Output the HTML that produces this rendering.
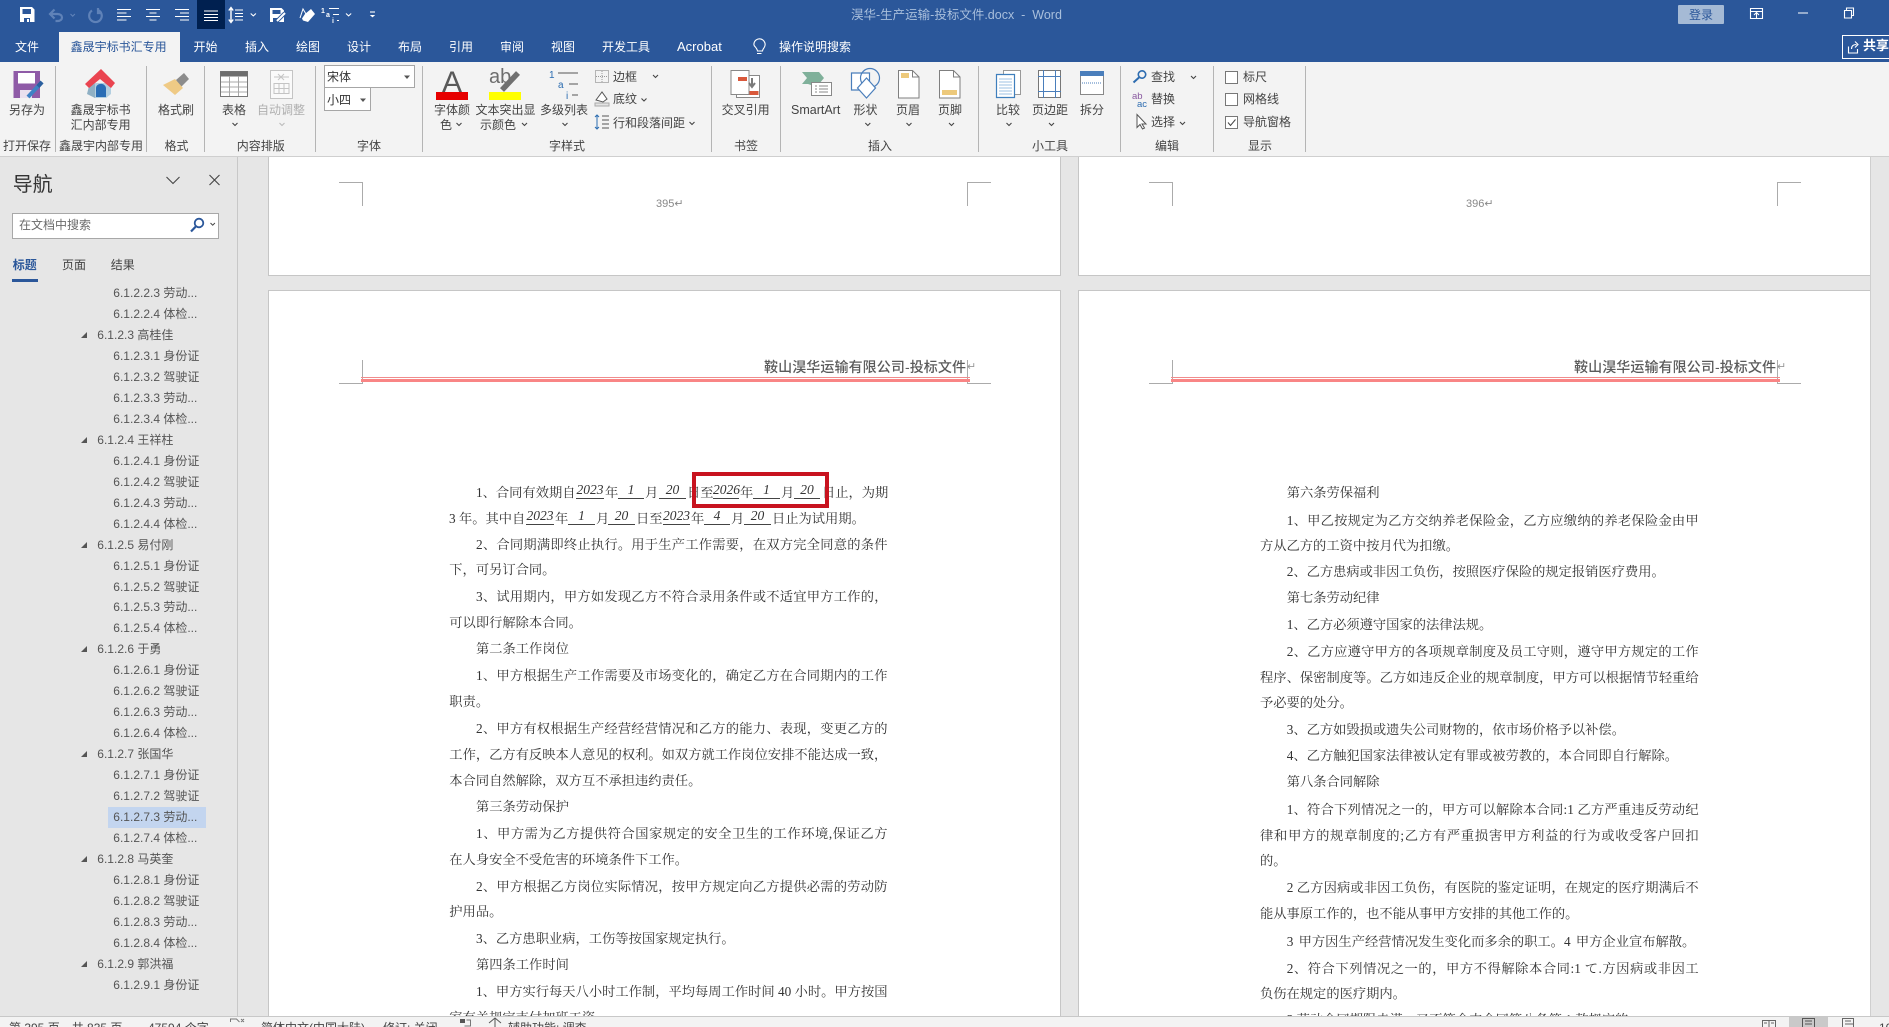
<!DOCTYPE html>
<html lang="zh-CN">
<head>
<meta charset="utf-8">
<title>淏华-生产运输-投标文件.docx - Word</title>
<style>
html,body{margin:0;padding:0;width:1889px;height:1027px;overflow:hidden;background:#e6e6e6}
body{position:relative;font-family:"Liberation Sans","Noto Sans CJK SC",sans-serif}
.abs{position:absolute}
.t{position:absolute;white-space:nowrap;font:12px/16px "Liberation Sans","Noto Sans CJK SC",sans-serif;color:#444}
.w{color:#fff}
.sep{position:absolute;width:1px;top:66px;height:86px;background:#b4b4b4}
.page{position:absolute;background:#fff;border:1px solid #c6c6c6;box-sizing:border-box}
.mk{position:absolute;background:#ababab}
.b{position:absolute;white-space:nowrap;font:13.27px/20px "Liberation Serif","Noto Serif CJK SC",serif;color:#333;height:20px}
.f{left:476px;width:411.5px;text-align:justify;text-align-last:justify}
.c{left:449.3px;width:438px;text-align:justify;text-align-last:justify}
.f2{left:1286.7px;width:412px;text-align:justify;text-align-last:justify}
.c2{left:1260px;width:438.7px;text-align:justify;text-align-last:justify}
.l1{left:476px}.l2{left:449.3px}.r1{left:1286.7px}.r2{left:1260px}
.h{position:absolute;font:italic 13.5px/17px "Liberation Serif",serif;color:#333;border-bottom:1px solid #444;text-align:center;height:17px;box-sizing:content-box}
.blur{position:absolute;left:0;top:1px;width:1889px;height:1027px;filter:blur(.3px)}
#tree{position:absolute;left:0;top:283.2px;width:237px;font:12px/20.96px "Liberation Sans","Noto Sans CJK SC",sans-serif;color:#555}
#tree div{height:20.96px;padding-left:113.3px;white-space:nowrap;box-sizing:border-box;position:relative}
#tree div.p{padding-left:97.3px}
#tree div.p:before{content:"";position:absolute;left:81px;top:7px;width:0;height:0;border-style:solid;border-width:0 0 6.5px 6.5px;border-color:transparent transparent #555 transparent}
</style>
</head>
<body>
<!-- title + tabs -->
<div class="abs" style="left:0;top:0;width:1889px;height:62px;background:#2b579a"></div>
<div class="abs" style="left:197px;top:0;width:28px;height:29px;background:#002050"></div>
<div class="t" style="left:851px;top:7px;color:#a9bfdc;font-size:12.5px">淏华-生产运输-投标文件.docx&nbsp; - &nbsp;Word</div>
<div class="abs" style="left:59px;top:32px;width:121px;height:30px;background:#f3f3f3"></div>
<div class="t w" style="left:15px;top:39px">文件</div>
<div class="t" style="left:70.6px;top:39px;color:#2b579a">鑫晟宇标书汇专用</div>
<div class="t w" style="left:193.5px;top:39px">开始</div>
<div class="t w" style="left:245px;top:39px">插入</div>
<div class="t w" style="left:296px;top:39px">绘图</div>
<div class="t w" style="left:347px;top:39px">设计</div>
<div class="t w" style="left:398px;top:39px">布局</div>
<div class="t w" style="left:449px;top:39px">引用</div>
<div class="t w" style="left:500px;top:39px">审阅</div>
<div class="t w" style="left:551px;top:39px">视图</div>
<div class="t w" style="left:602px;top:39px">开发工具</div>
<div class="t w" style="left:677px;top:39px;font-size:13px">Acrobat</div>
<div class="t w" style="left:779px;top:39px">操作说明搜索</div>
<div class="abs" style="left:1678px;top:5px;width:46px;height:19px;background:#a5bad5;border-radius:1px"></div>
<div class="t" style="left:1689px;top:7px;color:#2b579a">登录</div>
<div class="abs" style="left:1842px;top:35px;width:60px;height:24px;border:1px solid #fff;box-sizing:border-box"></div>
<div class="t w" style="left:1863px;top:38px;font-size:13px;font-weight:700">共享</div>

<!-- ribbon -->
<div class="abs" style="left:0;top:62px;width:1889px;height:94px;background:#f3f3f3"></div>
<div class="abs" style="left:0;top:156px;width:1889px;height:1px;background:#cfcfcf"></div>
<div class="sep" style="left:55px"></div><div class="sep" style="left:146px"></div><div class="sep" style="left:204px"></div><div class="sep" style="left:315px"></div><div class="sep" style="left:422px"></div><div class="sep" style="left:711px"></div><div class="sep" style="left:780px"></div><div class="sep" style="left:978px"></div><div class="sep" style="left:1120px"></div><div class="sep" style="left:1213px"></div><div class="sep" style="left:1305px"></div>

<div class="t" style="left:9px;top:102px">另存为</div>
<div class="t" style="left:3px;top:138px">打开保存</div>
<div class="t" style="left:70.6px;top:102px">鑫晟宇标书</div>
<div class="t" style="left:70.6px;top:117px">汇内部专用</div>
<div class="t" style="left:59px;top:138px">鑫晟宇内部专用</div>
<div class="t" style="left:158px;top:102px">格式刷</div>
<div class="t" style="left:164.5px;top:138px">格式</div>
<div class="t" style="left:222px;top:102px">表格</div>
<div class="t" style="left:257px;top:102px;color:#b0b0b0">自动调整</div>
<div class="t" style="left:236.7px;top:138px">内容排版</div>
<div class="abs" style="left:324px;top:65px;width:91px;height:23px;background:#fff;border:1px solid #a6a6a6;box-sizing:border-box"></div>
<div class="abs" style="left:324px;top:87px;width:47px;height:24px;background:#fff;border:1px solid #a6a6a6;box-sizing:border-box"></div>
<div class="t" style="left:327px;top:69px;color:#333">宋体</div>
<div class="t" style="left:327px;top:92px;color:#333">小四</div>
<div class="t" style="left:357px;top:138px">字体</div>
<div class="t" style="left:434px;top:102px">字体颜</div>
<div class="t" style="left:440px;top:117px">色</div>
<div class="t" style="left:475.5px;top:102px">文本突出显</div>
<div class="t" style="left:480px;top:117px">示颜色</div>
<div class="t" style="left:540px;top:102px">多级列表</div>
<div class="t" style="left:549px;top:138px">字样式</div>
<div class="t" style="left:613px;top:69px">边框</div>
<div class="t" style="left:613px;top:91px">底纹</div>
<div class="t" style="left:613px;top:115px">行和段落间距</div>
<div class="t" style="left:721.6px;top:102px">交叉引用</div>
<div class="t" style="left:734px;top:138px">书签</div>
<div class="t" style="left:791px;top:102px;font-size:12.5px">SmartArt</div>
<div class="t" style="left:853.5px;top:102px">形状</div>
<div class="t" style="left:896px;top:102px">页眉</div>
<div class="t" style="left:938px;top:102px">页脚</div>
<div class="t" style="left:868px;top:138px">插入</div>
<div class="t" style="left:996px;top:102px">比较</div>
<div class="t" style="left:1032px;top:102px">页边距</div>
<div class="t" style="left:1080px;top:102px">拆分</div>
<div class="t" style="left:1032px;top:138px">小工具</div>
<div class="t" style="left:1151px;top:69px">查找</div>
<div class="t" style="left:1151px;top:91px">替换</div>
<div class="t" style="left:1151px;top:114px">选择</div>
<div class="t" style="left:1155px;top:138px">编辑</div>
<div class="t" style="left:1243px;top:69px">标尺</div>
<div class="t" style="left:1243px;top:91px">网格线</div>
<div class="t" style="left:1243px;top:114px">导航窗格</div>
<div class="t" style="left:1248px;top:138px">显示</div>

<!-- icons -->
<svg class="abs" style="left:0;top:0" width="1889" height="157" viewBox="0 0 1889 157" fill="none">
<!-- QAT -->
<path d="M20 7h12l2.500 2.500V22H20z" fill="#fff"/><path d="M22.500 9h8.500v5h-8.500zM24 18h6v4h-6z" fill="#2b579a"/><path d="M27 19h2v3h-2z" fill="#fff"/>
<path d="M50.500 14h7c6 0 6 7 0 7h-2M54.500 9.500L50 14l4.500 4.500" stroke="#5f82b8" stroke-width="2.200"/>
<path d="M70.500 14l2.200 2.200 2.200-2.200" stroke="#5f82b8" stroke-width="1.100"/>
<path d="M92 9.500a6.300 6.300 0 1 0 6-.5M98 7v5h4" stroke="#5f82b8" stroke-width="2.200" transform="translate(0,1)"/>
<g stroke="#fff" stroke-width="1.100">
<path d="M117 9.500h14M117 13h9.500M117 16.500h14M117 20h9.500"/>
<path d="M146 9.500h14M149.500 13h7M146 16.500h14M149.500 20h7"/>
<path d="M175 9.500h14M180 13h9M175 16.500h14M180 20h9"/>
<path d="M204 11h14M204 14.500h14M204 17.500h14M204 20.500h14"/>
<path d="M235 10h8M235 13.500h8M235 16.500h8M235 20h8"/>
<path d="M231 8v14M228.800 10.500L231 7.500l2.200 3M228.800 19.500l2.200 3 2.200-3" stroke-width="1.400"/>
<path d="M250.700 13.500l2.600 2.400 2.600-2.400M346 13.500l2.600 2.400 2.600-2.400"/>
<path d="M329 8.500h10M333 14.500h6M337 20.500h2"/>
<path d="M370 12h5"/>
<path d="M1750.500 8.500h12v10h-12zM1750.500 11.500h12M1756.500 18v-5M1754 15l2.500-2.500 2.500 2.500M1798 13h10M1844.500 10.500h7v7.500h-7zM1846.500 10v-2h7v7.500h-2"/>
<path d="M1848.500 46.500v6.500h9v-4M1851.500 49c0-3 2-4.500 5-4.500M1855 41.500l3 3-3 3"/>
<path d="M753.900 44.500a5.600 5.600 0 1 1 10.300 3c-1 1.500-1.700 2.200-1.700 3.500h-5c0-1.300-.7-2-1.700-3.500-.5-.8-1.900-1.500-1.900-3z M757 53.500h4.500"/>
</g>
<path d="M270 8h11.500l2.500 2.500V22h-14z" fill="#fff"/><path d="M272.500 10h8v4h-8zM273 18h5v4h-5z" fill="#2b579a"/>
<path d="M276 22l9-9" stroke="#2b579a" stroke-width="4"/><path d="M277 21l8-8" stroke="#fff" stroke-width="2"/>
<path d="M305 14l6-5 4 5-7 8-5-1.500-1-2z" fill="#fff"/>
<path d="M300 18l3-9 3 5" stroke="#fff" stroke-width="1"/>
<text x="321" y="13" font-family="Liberation Sans" font-size="7" font-weight="700" fill="#fff">1</text>
<text x="326" y="17" font-family="Liberation Sans" font-size="7" font-weight="700" fill="#fff">a</text>
<text x="332" y="23" font-family="Liberation Sans" font-size="7" font-weight="700" fill="#fff">i</text>
<path d="M369.800 15h5.400l-2.700 2.400z" fill="#fff"/>
<!-- save as -->
<path d="M13.500 71h26.500v27H13.500z" fill="#8f5ba7"/>
<path d="M18 73h17v10.500H18z" fill="#fff"/><path d="M20 90h12v8H20z" fill="#e9e0ee"/>
<path d="M42 82L28 97" stroke="#3f82c4" stroke-width="4"/><path d="M42 82L38 86.500" stroke="#2b5f9e" stroke-width="4"/>
<!-- home -->
<path d="M90 83h21v11l-5 4H95l-5-4z" fill="#b3cfe0"/>
<path d="M89 86l-2 8 8 4v-14z" fill="#8fb0c4"/>
<path d="M101 69L85 84l4 4 11-9 11 9 4-5z" fill="#ea4450"/>
<path d="M96 88c0-5 9-6 10 0v9H96z" fill="#2a6db5"/>
<!-- brush -->
<path d="M176 80l8-7 5 6-8 8z" fill="#8c8c8c"/>
<path d="M163 85l12-6 8 9-8 7z" fill="#efca85"/>
<!-- table -->
<path d="M220.500 71.500h27v25h-27z" fill="#fff" stroke="#777"/><path d="M220.500 71.500h27v5h-27z" fill="#6e6e6e"/>
<path d="M229.500 76v20M238.500 76v20M221 82h26M221 87h26M221 92h26" stroke="#a8a8a8"/>
<!-- autofit -->
<path d="M270.500 70.500h22v28h-22z" fill="#fafafa" stroke="#c4c4c4"/>
<path d="M274 77h15M278 74l6 6M284 74l-6 6M274 83.500h15v10h-15zM274 88.500h15M279 83.500v10M284 83.500v10" stroke="#c4c4c4"/>
<!-- font color -->
<text x="452" y="92" text-anchor="middle" font-family="Liberation Sans" font-size="30" fill="#595959">A</text>
<path d="M436 92h32v8h-32z" fill="#e60000"/>
<text x="489" y="83" font-family="Liberation Sans" font-size="20" fill="#6e6e6e">ab</text>
<path d="M502 90L518 73" stroke="#707070" stroke-width="5.500"/>
<path d="M489 92h32v8h-32z" fill="#ffff00"/>
<!-- multilevel -->
<text x="549" y="78" font-family="Liberation Sans" font-size="10" fill="#2b6cb0">1</text>
<text x="558" y="88" font-family="Liberation Sans" font-size="10" fill="#2b6cb0">a</text>
<text x="566" y="99" font-family="Liberation Sans" font-size="10" fill="#2b6cb0">i</text>
<path d="M558 73h20M569 84h9M572 95h6" stroke="#555"/>
<!-- borders etc -->
<path d="M595.500 70.500h13v12h-13z" stroke="#777" stroke-dasharray="1 1"/><path d="M602 71v11M596 76.500h12" stroke="#999" stroke-dasharray="1 1"/>
<path d="M596 100l6-8 5 7-4 3z" stroke="#555" fill="#fff"/><path d="M595 103h14v3h-14z" fill="#e3e3e3" stroke="#aaa"/>
<path d="M597 115v14M595 117l2-2 2 2M595 127l2 2 2-2" stroke="#2b6cb0"/><path d="M602 116h7M602 120h7M602 124h7M602 128h7" stroke="#555"/>
<!-- cross ref -->
<path d="M736.500 75.500h23v22h-23z" fill="#fff" stroke="#888"/>
<path d="M731 70.500h18v24h-18z" fill="#fff" stroke="#888"/>
<path d="M738 77h9v4h-9z" fill="#d9583b"/><path d="M749.500 91h9v4h-9z" fill="#d9583b"/>
<path d="M752 78v8M749 83l3 4 3-4" stroke="#7a7a7a" stroke-width="2"/>
<!-- smartart -->
<path d="M802 72h17l5 6-5 6v10h-8v-9l-3-1h-6l5-6z" fill="#7fb09a"/>
<path d="M811.500 82.500h20v13h-20z" fill="#fff" stroke="#888"/><path d="M815 86h2M819 86h9M815 89h2M819 89h9M815 92h2M819 92h9" stroke="#888"/>
<!-- shapes -->
<path d="M851.500 73h18v17h-18z" fill="#fff" stroke="#4a7ebb" stroke-width="1.200"/>
<circle cx="870" cy="78" r="9.500" stroke="#4a7ebb" stroke-width="1.200"/>
<path d="M866.500 78l9 10-9 10-9-10z" fill="#fff" stroke="#4a7ebb" stroke-width="1.200"/>
<!-- header footer -->
<path d="M898.500 70.500h14l6.500 6.500v21h-20.500z" fill="#fff" stroke="#7f7f7f"/><path d="M912.500 70.500v6.500h6.500" stroke="#7f7f7f"/><path d="M901 73h8v5h-8z" fill="#edc97b"/>
<path d="M939.500 70.500h14l6.500 6.500v21h-20.500z" fill="#fff" stroke="#7f7f7f"/><path d="M953.500 70.500v6.500h6.500" stroke="#7f7f7f"/><path d="M942 90h15v5h-15z" fill="#edc97b"/>
<!-- compare -->
<path d="M1003.500 70.500h17v24h-17z" fill="#fff" stroke="#999"/><path d="M996.500 74.500h18v23h-18z" fill="#fff" stroke="#3f7fbd" stroke-width="1.200"/>
<path d="M999 79h13M999 82h13M999 85h13M999 88h13M999 91h13M999 94h13" stroke="#9dc1e3"/>
<!-- margins -->
<path d="M1038.500 70.500h22v27h-22z" fill="#fff" stroke="#777"/><path d="M1043.500 70v28M1055.500 70v28M1038 76.500h23M1038 91.500h23" stroke="#4a7ebb"/>
<!-- split -->
<path d="M1080.500 71.500h23v23h-23z" fill="#fff" stroke="#888"/><path d="M1080 71h24v5h-24z" fill="#4a7ebb"/><path d="M1082 83h20" stroke="#4a7ebb" stroke-dasharray="1 1"/>
<!-- find / replace / select -->
<circle cx="1142" cy="74.500" r="3.700" stroke="#2d6cb0" stroke-width="1.600"/><path d="M1139 77.500l-5.500 5" stroke="#2d6cb0" stroke-width="2"/>
<text x="1132" y="99" font-family="Liberation Sans" font-size="9.500" fill="#8a5aa0">ab</text>
<text x="1137" y="107" font-family="Liberation Sans" font-size="9.500" fill="#2d6cb0">ac</text>
<path d="M1137 114.500v13l3-3 2.500 4.500 2-1-2.500-4h4z" fill="#fff" stroke="#555"/>
<!-- check boxes -->
<path d="M1225.500 71.500h12v12h-12zM1225.500 93.500h12v12h-12zM1225.500 116.500h12v12h-12z" fill="#fff" stroke="#777"/>
<path d="M1228 122.500l2.500 3 5-6" stroke="#444"/>
<!-- chevrons -->
<path d="M232.500 123l2.500 2.500 2.500-2.500M456.500 123l2.500 2.500 2.500-2.500M522 123l2.500 2.500 2.500-2.500M562.500 123l2.500 2.500 2.500-2.500M653 75l2.500 2.500 2.500-2.500M641.500 98.500l2.500 2.500 2.500-2.500M689.500 122l2.500 2.500 2.500-2.500M865.300 123l2.500 2.500 2.500-2.500M906.500 123l2.500 2.500 2.500-2.500M949 123l2.500 2.500 2.500-2.500M1006.500 123l2.500 2.500 2.500-2.500M1049 123l2.500 2.500 2.500-2.500M1191 76l2.500 2.500 2.500-2.500M1180 122l2.500 2.500 2.500-2.500" stroke="#444" stroke-width="1.100"/>
<path d="M279.500 123l2.500 2.500 2.500-2.500" stroke="#bbb" stroke-width="1.100"/>
<path d="M404 75.500h6l-3 3.500zM360 98.500h6l-3 3.500z" fill="#555"/>
</svg>

<!-- nav pane -->
<div class="abs" style="left:237px;top:157px;width:1px;height:859px;background:#c8c8c8"></div>
<div class="t" style="left:12.7px;top:173px;font-size:20px;line-height:24px;color:#333">导航</div>
<svg class="abs" style="left:0;top:157px" width="237" height="130" fill="none">
<path d="M166.500 20l6.500 6.500 6.500-6.500M209.500 18l10 10M219.500 18l-10 10" stroke="#444" stroke-width="1.100"/>
</svg>
<div class="abs" style="left:12px;top:213px;width:207px;height:26px;background:#fff;border:1px solid #a8a8a8;box-sizing:border-box"></div>
<div class="t" style="left:19px;top:217px;color:#6a6a6a">在文档中搜索</div>
<svg class="abs" style="left:185px;top:215px" width="34" height="22" fill="none">
<circle cx="14" cy="8" r="4.300" stroke="#2b579a" stroke-width="1.800"/><path d="M10.800 11.500l-4.800 5" stroke="#2b579a" stroke-width="2.200"/>
<path d="M25.500 8l2.200 2.200 2.200-2.200" stroke="#444"/>
</svg>
<div class="t" style="left:12.7px;top:257px;color:#2b579a;font-weight:700">标题</div>
<div class="t" style="left:62px;top:257px">页面</div>
<div class="t" style="left:110.7px;top:257px">结果</div>
<div class="abs" style="left:12px;top:279px;width:26px;height:3px;background:#2b579a"></div>
<div id="tree">
<div>6.1.2.2.3 劳动...</div>
<div>6.1.2.2.4 体检...</div>
<div class="p">6.1.2.3 高桂佳</div>
<div>6.1.2.3.1 身份证</div>
<div>6.1.2.3.2 驾驶证</div>
<div>6.1.2.3.3 劳动...</div>
<div>6.1.2.3.4 体检...</div>
<div class="p">6.1.2.4 王祥柱</div>
<div>6.1.2.4.1 身份证</div>
<div>6.1.2.4.2 驾驶证</div>
<div>6.1.2.4.3 劳动...</div>
<div>6.1.2.4.4 体检...</div>
<div class="p">6.1.2.5 易付刚</div>
<div>6.1.2.5.1 身份证</div>
<div>6.1.2.5.2 驾驶证</div>
<div>6.1.2.5.3 劳动...</div>
<div>6.1.2.5.4 体检...</div>
<div class="p">6.1.2.6 于勇</div>
<div>6.1.2.6.1 身份证</div>
<div>6.1.2.6.2 驾驶证</div>
<div>6.1.2.6.3 劳动...</div>
<div>6.1.2.6.4 体检...</div>
<div class="p">6.1.2.7 张国华</div>
<div>6.1.2.7.1 身份证</div>
<div>6.1.2.7.2 驾驶证</div>
<div style="background:linear-gradient(to right,transparent 108px,#c3d5ef 108px,#c3d5ef 206px,transparent 206px)">6.1.2.7.3 劳动...</div>
<div>6.1.2.7.4 体检...</div>
<div class="p">6.1.2.8 马英奎</div>
<div>6.1.2.8.1 身份证</div>
<div>6.1.2.8.2 驾驶证</div>
<div>6.1.2.8.3 劳动...</div>
<div>6.1.2.8.4 体检...</div>
<div class="p">6.1.2.9 郭洪福</div>
<div>6.1.2.9.1 身份证</div>
</div>

<!-- pages -->
<div class="page" style="left:268px;width:793px;border-top:0;top:157px;height:119px"></div>
<div class="page" style="left:1078px;top:157px;width:793px;height:119px;border-top:0"></div>
<div class="page" style="left:268px;top:290px;width:793px;height:730px"></div>
<div class="page" style="left:1078px;top:290px;width:793px;height:730px"></div>
<div class="abs" style="left:1870px;top:157px;width:1px;height:859px;background:#cfcfcf"></div>

<!-- crop marks -->
<div class="mk" style="left:339px;top:182px;width:24px;height:1px"></div><div class="mk" style="left:362px;top:182px;width:1px;height:24px"></div>
<div class="mk" style="left:967px;top:182px;width:24px;height:1px"></div><div class="mk" style="left:967px;top:182px;width:1px;height:24px"></div>
<div class="mk" style="left:1149px;top:182px;width:24px;height:1px"></div><div class="mk" style="left:1172px;top:182px;width:1px;height:24px"></div>
<div class="mk" style="left:1777px;top:182px;width:24px;height:1px"></div><div class="mk" style="left:1777px;top:182px;width:1px;height:24px"></div>
<div class="mk" style="left:339px;top:383px;width:24px;height:1px"></div><div class="mk" style="left:362px;top:360px;width:1px;height:24px"></div>
<div class="mk" style="left:967px;top:383px;width:24px;height:1px"></div><div class="mk" style="left:967px;top:360px;width:1px;height:24px"></div>
<div class="mk" style="left:1149px;top:383px;width:24px;height:1px"></div><div class="mk" style="left:1172px;top:360px;width:1px;height:24px"></div>
<div class="mk" style="left:1777px;top:383px;width:24px;height:1px"></div><div class="mk" style="left:1777px;top:360px;width:1px;height:24px"></div>

<div class="t" style="left:656px;top:196px;font-size:11px;color:#888">395↵</div>
<div class="t" style="left:1466px;top:196px;font-size:11px;color:#888">396↵</div>

<div class="abs" style="left:361px;top:377px;width:609px;height:1px;background:#f08c8c"></div>
<div class="abs" style="left:361px;top:379px;width:609px;height:3px;background:#f98585"></div>
<div class="abs" style="left:1171px;top:377px;width:609px;height:1px;background:#f08c8c"></div>
<div class="abs" style="left:1171px;top:379px;width:609px;height:3px;background:#f98585"></div>
<div class="t" style="left:764px;top:357px;width:202px;height:20px;font-size:14px;line-height:20px;color:#5a5a5a;font-weight:500;text-align:justify;text-align-last:justify">鞍山淏华运输有限公司-投标文件</div>
<div class="t" style="left:1574px;top:357px;width:202px;height:20px;font-size:14px;line-height:20px;color:#5a5a5a;font-weight:500;text-align:justify;text-align-last:justify">鞍山淏华运输有限公司-投标文件</div>
<div class="t" style="left:967px;top:359px;font-size:11px;color:#999">↵</div>
<div class="t" style="left:1777px;top:359px;font-size:11px;color:#999">↵</div>

<div class="blur">
<!-- left page -->
<div class="b" style="left:476px;top:482px;width:99px;text-align:justify;text-align-last:justify">1、合同有效期自</div>
<div class="h" style="left:576px;top:480px;width:28px">2023</div>
<div class="b" style="left:605px;top:482px">年</div>
<div class="h" style="left:618px;top:480px;width:26px">1</div>
<div class="b" style="left:645px;top:482px">月</div>
<div class="h" style="left:659px;top:480px;width:27px">20</div>
<div class="b" style="left:687px;top:482px">日至</div>
<div class="h" style="left:713px;top:480px;width:26px">2026</div>
<div class="b" style="left:740px;top:482px">年</div>
<div class="h" style="left:753px;top:480px;width:27px">1</div>
<div class="b" style="left:781px;top:482px">月</div>
<div class="h" style="left:794px;top:480px;width:26px">20</div>
<div class="b" style="left:822px;top:482px">日止，为期</div>

<div class="b" style="left:449px;top:508px">3 年。其中自</div>
<div class="h" style="left:526px;top:506px;width:28px">2023</div>
<div class="b" style="left:555px;top:508px">年</div>
<div class="h" style="left:568px;top:506px;width:27px">1</div>
<div class="b" style="left:596px;top:508px">月</div>
<div class="h" style="left:608px;top:506px;width:27px">20</div>
<div class="b" style="left:636px;top:508px">日至</div>
<div class="h" style="left:663px;top:506px;width:27px">2023</div>
<div class="b" style="left:691px;top:508px">年</div>
<div class="h" style="left:704px;top:506px;width:26px">4</div>
<div class="b" style="left:731px;top:508px">月</div>
<div class="h" style="left:744px;top:506px;width:27px">20</div>
<div class="b" style="left:772px;top:508px">日止为试用期。</div>

<div class="b f" style="top:534px">2、合同期满即终止执行。用于生产工作需要，在双方完全同意的条件</div>
<div class="b l2" style="top:559px">下，可另订合同。</div>
<div class="b f" style="top:586px">3、试用期内，甲方如发现乙方不符合录用条件或不适宜甲方工作的，</div>
<div class="b l2" style="top:612px">可以即行解除本合同。</div>
<div class="b l1" style="top:638px">第二条工作岗位</div>
<div class="b f" style="top:665px">1、甲方根据生产工作需要及市场变化的，确定乙方在合同期内的工作</div>
<div class="b l2" style="top:691px">职责。</div>
<div class="b f" style="top:718px">2、甲方有权根据生产经营经营情况和乙方的能力、表现，变更乙方的</div>
<div class="b c" style="top:744px">工作，乙方有反映本人意见的权利。如双方就工作岗位安排不能达成一致，</div>
<div class="b l2" style="top:770px">本合同自然解除，双方互不承担违约责任。</div>
<div class="b l1" style="top:796px">第三条劳动保护</div>
<div class="b f" style="top:823px">1、甲方需为乙方提供符合国家规定的安全卫生的工作环境,保证乙方</div>
<div class="b l2" style="top:849px">在人身安全不受危害的环境条件下工作。</div>
<div class="b f" style="top:876px">2、甲方根据乙方岗位实际情况，按甲方规定向乙方提供必需的劳动防</div>
<div class="b l2" style="top:901px">护用品。</div>
<div class="b l1" style="top:928px">3、乙方患职业病，工伤等按国家规定执行。</div>
<div class="b l1" style="top:954px">第四条工作时间</div>
<div class="b f" style="top:981px">1、甲方实行每天八小时工作制，平均每周工作时间 40 小时。甲方按国</div>
<div class="b l2" style="top:1007px">家有关规定支付加班工资。</div>

<!-- right page -->
<div class="b r1" style="top:482px">第六条劳保福利</div>
<div class="b f2" style="top:510px">1、甲乙按规定为乙方交纳养老保险金，乙方应缴纳的养老保险金由甲</div>
<div class="b r2" style="top:535px">方从乙方的工资中按月代为扣缴。</div>
<div class="b r1" style="top:561px">2、乙方患病或非因工负伤，按照医疗保险的规定报销医疗费用。</div>
<div class="b r1" style="top:587px">第七条劳动纪律</div>
<div class="b r1" style="top:614px">1、乙方必须遵守国家的法律法规。</div>
<div class="b f2" style="top:641px">2、乙方应遵守甲方的各项规章制度及员工守则，遵守甲方规定的工作</div>
<div class="b c2" style="top:667px">程序、保密制度等。乙方如违反企业的规章制度，甲方可以根据情节轻重给</div>
<div class="b r2" style="top:692px">予必要的处分。</div>
<div class="b r1" style="top:719px">3、乙方如毁损或遗失公司财物的，依市场价格予以补偿。</div>
<div class="b r1" style="top:745px">4、乙方触犯国家法律被认定有罪或被劳教的，本合同即自行解除。</div>
<div class="b r1" style="top:771px">第八条合同解除</div>
<div class="b f2" style="top:799px">1、符合下列情况之一的，甲方可以解除本合同:1 乙方严重违反劳动纪</div>
<div class="b c2" style="top:825px">律和甲方的规章制度的;乙方有严重损害甲方利益的行为或收受客户回扣</div>
<div class="b r2" style="top:850px">的。</div>
<div class="b f2" style="top:877px">2 乙方因病或非因工负伤，有医院的鉴定证明，在规定的医疗期满后不</div>
<div class="b r2" style="top:903px">能从事原工作的，也不能从事甲方安排的其他工作的。</div>
<div class="b r1" style="top:931px;word-spacing:2px">3 甲方因生产经营情况发生变化而多余的职工。4 甲方企业宣布解散。</div>
<div class="b f2" style="top:958px">2、符合下列情况之一的，甲方不得解除本合同:1 て.方因病或非因工</div>
<div class="b r2" style="top:983px">负伤在规定的医疗期内。</div>
<div class="b r1" style="top:1009px">3 劳动合同期限未满，又不符合本合同第八条第 1 款规定的</div>
</div>

<!-- red box -->
<div class="abs" style="left:692px;top:472px;width:137px;height:36px;border:4px solid #c8131f;box-sizing:border-box"></div>

<!-- status bar -->
<div class="abs" style="left:0;top:1016px;width:1889px;height:11px;background:#f3f3f3;border-top:1px solid #c8c8c8;box-sizing:border-box;overflow:hidden"></div>
<div class="abs" style="left:1789px;top:1017px;width:39px;height:10px;background:#c9c9c9"></div>
<div class="t" style="left:9px;top:1020px;color:#444">第 395 页，共 835 页</div>
<div class="t" style="left:148px;top:1020px;color:#444">47594 个字</div>
<div class="t" style="left:261px;top:1020px;color:#444">简体中文(中国大陆)</div>
<div class="t" style="left:383px;top:1020px;color:#444">修订: 关闭</div>
<div class="t" style="left:508px;top:1020px;color:#444">辅助功能: 调查</div>
<div class="t" style="left:1879px;top:1020px;color:#444">10</div>
<svg class="abs" style="left:0;top:1017px" width="1889" height="10" fill="none">
<path d="M230.500 5V2h6l3 3M241 2l3 3M241 5l3-3" stroke="#777"/>
<path d="M460 2h5v4h-5z" fill="#555"/><path d="M466.500 3h4v6h-6" stroke="#777"/>
<path d="M489 6l6-5 6 5M495 1v9" stroke="#555"/>
<path d="M1762.500 3.500h13v7h-13zM1769 3v8M1764 6h3M1771 6h3" stroke="#666"/>
<path d="M1802.500 1.500h12v9h-12zM1805 4h7M1805 7h7" stroke="#555"/>
<path d="M1842.500 1.500h11v9h-11zM1845 4h6M1845 7h8" stroke="#666"/>
</svg>
</body>
</html>
